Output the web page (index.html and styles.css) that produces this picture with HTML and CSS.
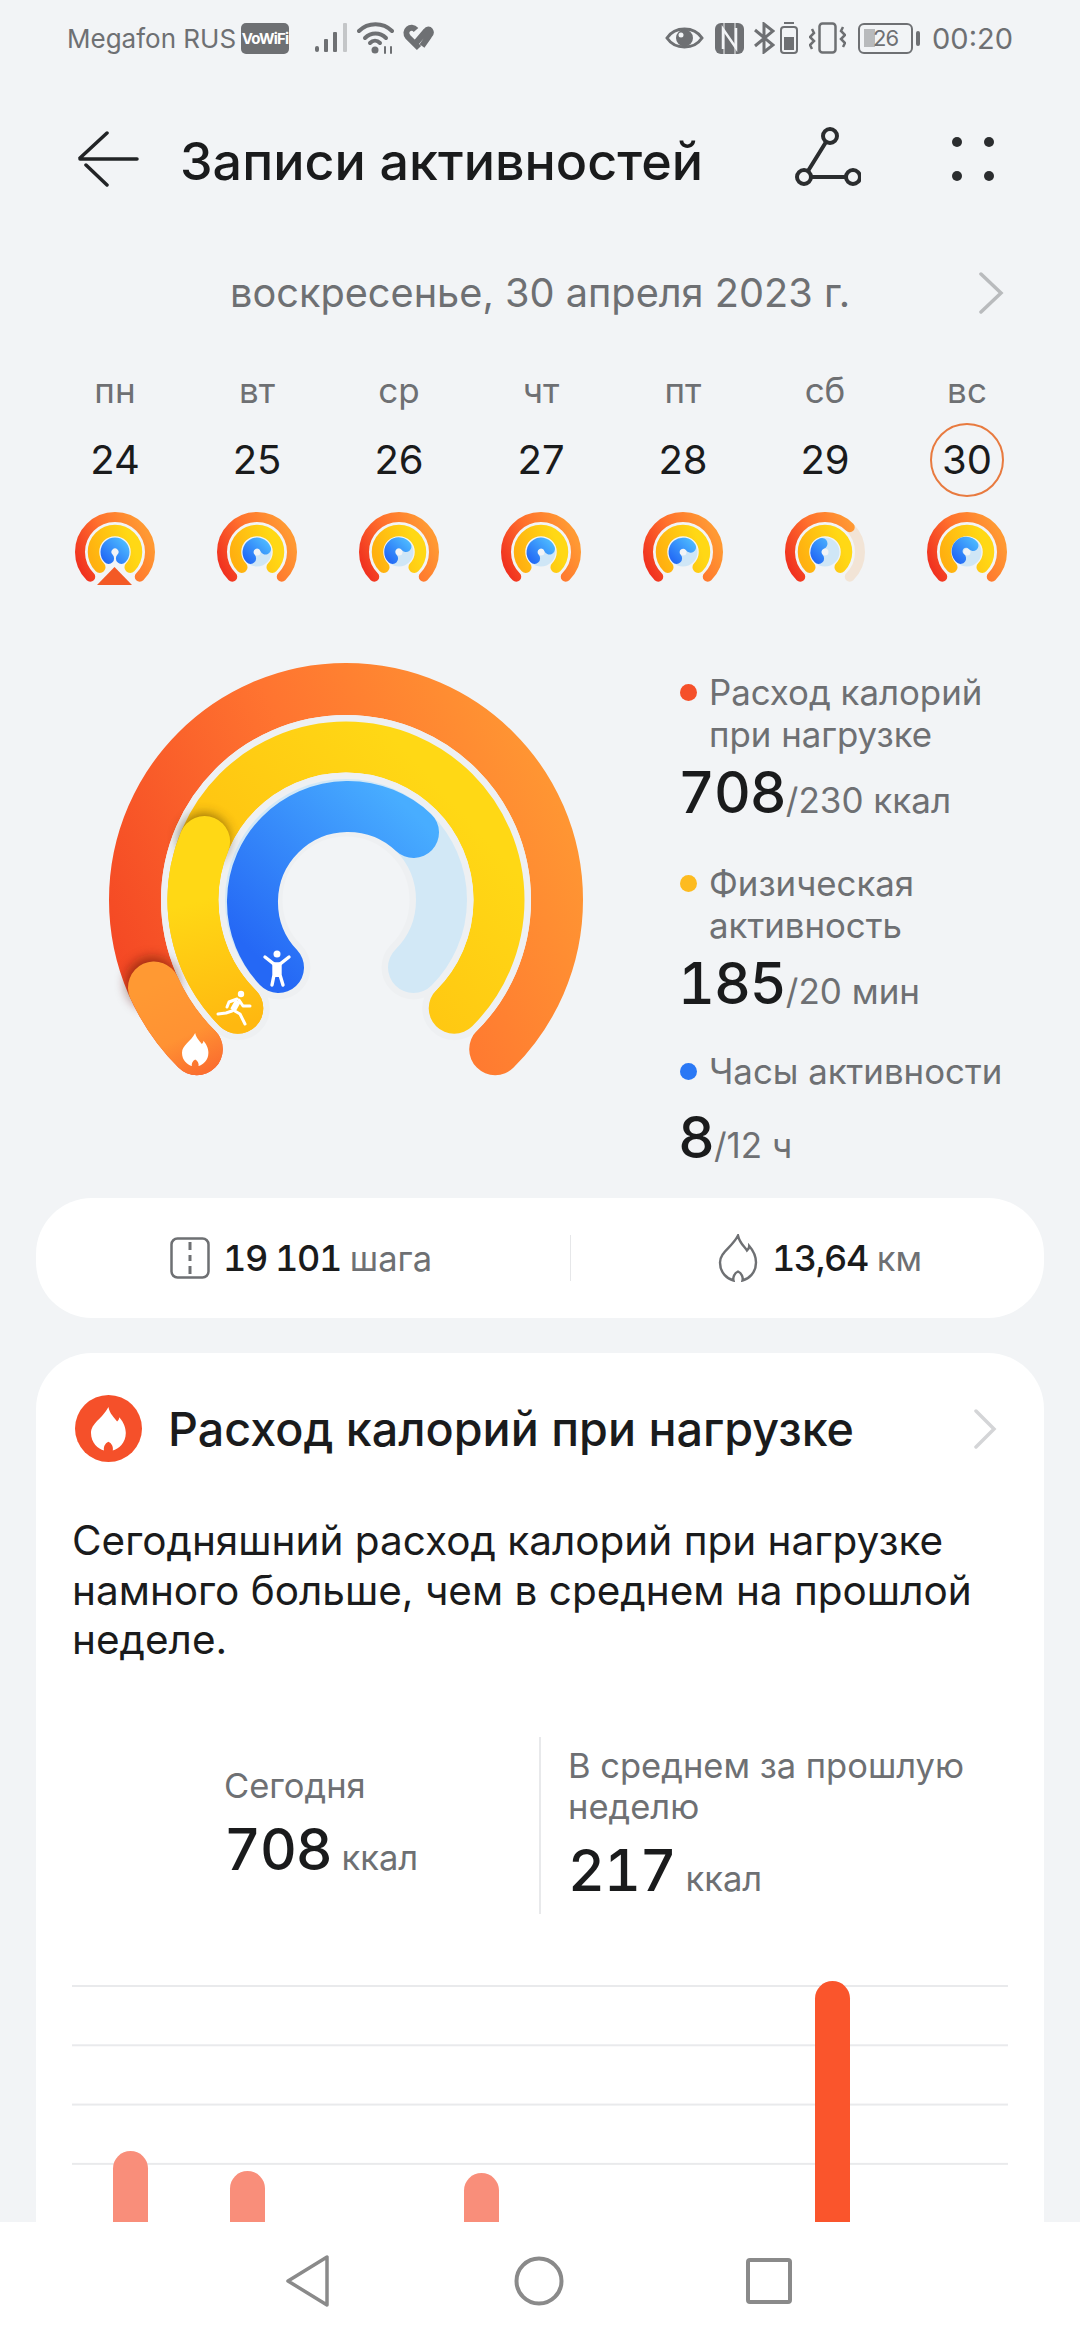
FILE: index.html
```html
<!DOCTYPE html>
<html>
<head>
    <title>Записи активностей</title>
    <meta charset="utf-8">
    <link rel="stylesheet" href="styles.css">
</head>
<body>
    <!-- shared gradients and small ring parts -->
    <svg class="sprite">
        <defs>
            <linearGradient id="bigOuter" gradientUnits="userSpaceOnUse" x1="130" y1="1000" x2="583" y2="800">
                <stop offset="0" stop-color="#f44824"/>
                <stop offset="0.5" stop-color="#ff7430"/>
                <stop offset="1" stop-color="#ff9933"/>
            </linearGradient>
            <linearGradient id="bigOuterCap" gradientUnits="userSpaceOnUse" x1="197" y1="1075" x2="155" y2="985">
                <stop offset="0" stop-color="#fb6f2f"/>
                <stop offset="0.4" stop-color="#ff9233"/>
                <stop offset="1" stop-color="#ff9933"/>
            </linearGradient>
            <linearGradient id="bigYellow" gradientUnits="userSpaceOnUse" x1="230" y1="1000" x2="450" y2="800">
                <stop offset="0" stop-color="#ffbb10"/>
                <stop offset="1" stop-color="#ffd815"/>
            </linearGradient>
            <linearGradient id="bigYellowCap" gradientUnits="userSpaceOnUse" x1="238" y1="1025" x2="205" y2="900">
                <stop offset="0" stop-color="#ffb810"/>
                <stop offset="1" stop-color="#ffd815"/>
            </linearGradient>
            <linearGradient id="bigBlue" gradientUnits="userSpaceOnUse" x1="275" y1="975" x2="420" y2="820">
                <stop offset="0" stop-color="#2568f5"/>
                <stop offset="1" stop-color="#48adff"/>
            </linearGradient>
            <linearGradient id="dayOuter" gradientUnits="userSpaceOnUse" x1="8" y1="65" x2="76" y2="30">
                <stop offset="0" stop-color="#f0301f"/>
                <stop offset="0.5" stop-color="#ff702d"/>
                <stop offset="1" stop-color="#ff9933"/>
            </linearGradient>
            <linearGradient id="dayYellow" gradientUnits="userSpaceOnUse" x1="20" y1="55" x2="60" y2="40">
                <stop offset="0" stop-color="#ffb010"/>
                <stop offset="1" stop-color="#ffd815"/>
            </linearGradient>
            <linearGradient id="dayBlue" gradientUnits="userSpaceOnUse" x1="30" y1="50" x2="50" y2="30">
                <stop offset="0" stop-color="#2268f5"/>
                <stop offset="1" stop-color="#4cb8ff"/>
            </linearGradient>
            <filter id="soft" x="-50%" y="-50%" width="200%" height="200%">
                <feGaussianBlur stdDeviation="6"/>
            </filter>
            <path id="flame" d="M12 0C13 5 16 7 18 10C19 9 19.5 8 19.5 7C23 11 24 15 24 18C24 25 19 29 15 30C15.5 28 14.5 25 12 24C9.5 25 8.5 28 9 30C5 29 0 25 0 18C0 11 8 8 12 0Z"/>
            <path id="dayOuterFull" d="M15.25 64.75A35 35 0 1 1 64.75 64.75" fill="none" stroke="url(#dayOuter)" stroke-width="10" stroke-linecap="round"/>
            <path id="dayYellowFull" d="M24.8 55.2A21.5 21.5 0 1 1 55.2 55.2" fill="none" stroke="url(#dayYellow)" stroke-width="11.5" stroke-linecap="round"/>
            <circle id="dayTrack" cx="40" cy="40" r="9" fill="none" stroke="#cfe6f6" stroke-width="11"/>
        </defs>
    </svg>

    <div class="status">
        <div class="status-group">
            <span class="carrier">Megafon RUS</span>
            <span class="vowifi">VoWiFi</span>
            <svg class="sig" width="32" height="32" viewBox="0 0 32 32">
                <rect x="0" y="24" width="4" height="6" rx="2" fill="#6e7073"/>
                <rect x="9" y="17" width="4" height="13" rx="1" fill="#6e7073"/>
                <rect x="18" y="10" width="4" height="20" rx="1" fill="#6e7073"/>
                <rect x="28" y="1" width="4" height="29" rx="1" fill="#c4c6c8"/>
            </svg>
            <svg class="wifi" width="38" height="32" viewBox="0 0 38 32" fill="none" stroke="#6e7073" stroke-width="4" stroke-linecap="round">
                <path d="M2 9C11 0 26 0 35 9"/>
                <path d="M8 16C14 10 23 10 29 16"/>
                <circle cx="18" cy="28" r="3.5" fill="#6e7073" stroke="none"/>
                <path d="M13 21C16 18 20 18 23 21"/>
                <path d="M28 25V31M34 25V31" stroke-width="2"/>
            </svg>
            <svg class="heart" width="32" height="30" viewBox="0 0 32 30" fill="none" stroke="#6e7073" stroke-width="6">
                <path d="M17 25L6 14C1 8 9 1 14 7"/>
                <path d="M13 21L24 8C27 4 31 9 27 13L20 23"/>
            </svg>
        </div>
        <div class="status-group">
            <svg width="39" height="26" viewBox="0 0 39 26">
                <path d="M2 13C10 1 29 1 37 13C29 25 10 25 2 13Z" fill="none" stroke="#6e7073" stroke-width="3"/>
                <circle cx="19.5" cy="13" r="8.5" fill="#6e7073"/>
                <circle cx="16" cy="10" r="2.5" fill="#f2f4f6"/>
            </svg>
            <svg class="nfc" width="29" height="31" viewBox="0 0 29 31">
                <rect width="29" height="31" rx="6" fill="#6e7073"/>
                <path d="M9 0V31M20 0V31" stroke="#f2f4f6" stroke-width="1"/>
                <path d="M8 26V6L21 25V5" fill="none" stroke="#f2f4f6" stroke-width="2.5"/>
            </svg>
            <svg class="bt" width="21" height="32" viewBox="0 0 21 32" fill="none" stroke="#6e7073" stroke-width="3">
                <path d="M1 8L19 23L10 30V2L19 9L1 24"/>
            </svg>
            <svg class="mini" width="18" height="32" viewBox="0 0 18 32">
                <rect x="4" y="0" width="10" height="2" fill="#6e7073"/>
                <rect x="1" y="5" width="16" height="26" rx="3" fill="none" stroke="#6e7073" stroke-width="2"/>
                <rect x="4" y="15" width="10" height="13" fill="#6e7073"/>
            </svg>
            <svg class="vib" width="37" height="32" viewBox="0 0 37 32" fill="none" stroke="#6e7073" stroke-width="2.5">
                <rect x="10.5" y="1.5" width="16" height="29" rx="3"/>
                <path d="M3 7L5 11L1 15L5 19L1 23L3 27M34 5L32 9L36 13L32 17L36 21L34 25"/>
            </svg>
            <span class="battery"><span class="battery-text">26</span></span>
            <span class="battery-nub"></span>
            <span class="clock">00:20</span>
        </div>
    </div>

    <div class="toolbar">
        <svg class="back" width="62" height="56" viewBox="0 0 62 56" fill="none" stroke="#222426" stroke-width="3.5" stroke-linecap="round">
            <path d="M60 28H3M30 2L3 27M9 34L30 54"/>
        </svg>
        <h1 class="title">Записи активностей</h1>
        <svg class="route" width="66" height="66" viewBox="0 0 66 66" fill="none" stroke="#2b2d2f" stroke-width="4">
            <circle cx="35" cy="10" r="7"/>
            <circle cx="9" cy="51" r="7"/>
            <circle cx="58" cy="51" r="7"/>
            <path d="M31 16L13 45M16 51H51"/>
        </svg>
        <div class="dots"><i></i><i></i><i></i><i></i></div>
    </div>

    <div class="date-row">
        <span class="date">воскресенье, 30 апреля 2023 г.</span>
        <svg class="date-next" width="26" height="42" viewBox="0 0 26 42" fill="none" stroke="#b9bbbd" stroke-width="3.5" stroke-linecap="round">
            <path d="M3 2L23 21L3 40"/>
        </svg>
    </div>

    <div class="week">
        <div class="day">
            <span class="day-name">пн</span>
            <span class="day-num">24</span>
            <svg class="day-ring" width="80" height="80" viewBox="0 0 80 80">
                <use href="#dayOuterFull"/><use href="#dayYellowFull"/>
                <path d="M33.6 46.4A9 9 0 1 1 46.4 46.4" fill="none" stroke="url(#dayBlue)" stroke-width="11" stroke-linecap="round"/>
                <polygon points="39.5,55 22,73 57,73" fill="#f35a26"/>
            </svg>
        </div>
        <div class="day">
            <span class="day-name">вт</span>
            <span class="day-num">25</span>
            <svg class="day-ring" width="80" height="80" viewBox="0 0 80 80">
                <use href="#dayOuterFull"/><use href="#dayYellowFull"/><use href="#dayTrack"/>
                <path d="M33.6 46.4A9 9 0 1 1 48.5 37" fill="none" stroke="url(#dayBlue)" stroke-width="11" stroke-linecap="round"/>
            </svg>
        </div>
        <div class="day">
            <span class="day-name">ср</span>
            <span class="day-num">26</span>
            <svg class="day-ring" width="80" height="80" viewBox="0 0 80 80">
                <use href="#dayOuterFull"/><use href="#dayYellowFull"/><use href="#dayTrack"/>
                <path d="M33.6 46.4A9 9 0 1 1 47 34.5" fill="none" stroke="url(#dayBlue)" stroke-width="11" stroke-linecap="round"/>
            </svg>
        </div>
        <div class="day">
            <span class="day-name">чт</span>
            <span class="day-num">27</span>
            <svg class="day-ring" width="80" height="80" viewBox="0 0 80 80">
                <use href="#dayOuterFull"/><use href="#dayYellowFull"/><use href="#dayTrack"/>
                <path d="M33.6 46.4A9 9 0 1 1 48.5 37" fill="none" stroke="url(#dayBlue)" stroke-width="11" stroke-linecap="round"/>
            </svg>
        </div>
        <div class="day">
            <span class="day-name">пт</span>
            <span class="day-num">28</span>
            <svg class="day-ring" width="80" height="80" viewBox="0 0 80 80">
                <use href="#dayOuterFull"/><use href="#dayYellowFull"/><use href="#dayTrack"/>
                <path d="M33.6 46.4A9 9 0 1 1 47.6 35.2" fill="none" stroke="url(#dayBlue)" stroke-width="11" stroke-linecap="round"/>
            </svg>
        </div>
        <div class="day">
            <span class="day-name">сб</span>
            <span class="day-num">29</span>
            <svg class="day-ring" width="80" height="80" viewBox="0 0 80 80">
                <path d="M15.25 64.75A35 35 0 1 1 64.75 64.75" fill="none" stroke="#f2e4d6" stroke-width="10" stroke-linecap="round"/>
                <path d="M15.25 64.75A35 35 0 0 1 64.75 15.25" fill="none" stroke="url(#dayOuter)" stroke-width="10" stroke-linecap="round"/>
                <use href="#dayYellowFull"/><use href="#dayTrack"/>
                <path d="M33.6 46.4A9 9 0 0 1 37 31.5" fill="none" stroke="url(#dayBlue)" stroke-width="11" stroke-linecap="round"/>
            </svg>
        </div>
        <div class="day">
            <span class="day-name">вс</span>
            <span class="day-num day-num-now">30</span>
            <svg class="day-ring" width="80" height="80" viewBox="0 0 80 80">
                <use href="#dayOuterFull"/><use href="#dayYellowFull"/><use href="#dayTrack"/>
                <path d="M33.6 46.4A9 9 0 1 1 46 33.5" fill="none" stroke="url(#dayBlue)" stroke-width="11" stroke-linecap="round"/>
            </svg>
        </div>
    </div>

    <div class="hero">
        <svg class="gauge" width="520" height="450" viewBox="90 650 520 450" fill="none" stroke-linecap="round">
            <path d="M196.8 1050.2A211 211 0 1 1 495.2 1050.2" stroke="url(#bigOuter)" stroke-width="52"/>
            <path d="M237.8 1009.2A153 153 0 1 1 454.2 1009.2" stroke="#eef0f2" stroke-width="64"/>
            <path d="M237.8 1009.2A153 153 0 1 1 454.2 1009.2" stroke="url(#bigYellow)" stroke-width="51"/>
            <path d="M278.5 968.5A95.5 95.5 0 1 1 413.5 968.5" stroke="#eef0f2" stroke-width="64"/>
            <path d="M278.5 968.5A95.5 95.5 0 1 1 413.5 968.5" stroke="#d2e8f6" stroke-width="51"/>
            <path d="M278.5 968.5A95.5 95.5 0 0 1 413.5 833.5" stroke="url(#bigBlue)" stroke-width="51"/>
            <circle cx="152" cy="984" r="26" fill="#5a1200" stroke="none" opacity="0.55" filter="url(#soft)"/>
            <path d="M196.8 1050.2A211 211 0 0 1 154 988.5" stroke="url(#bigOuterCap)" stroke-width="52"/>
            <circle cx="204" cy="840" r="25" fill="#4a3000" stroke="none" opacity="0.6" filter="url(#soft)"/>
            <path d="M237.8 1009.2A153 153 0 0 1 204.6 842.5" stroke="url(#bigYellowCap)" stroke-width="51"/>
            <use href="#flame" transform="translate(182 1034) scale(1.1)" fill="#fff" stroke="none"/>
            <!-- runner -->
            <g stroke="#fff" stroke-width="3" stroke-linejoin="round">
                <circle cx="241" cy="995" r="3.2" fill="#fff" stroke="none"/>
                <path d="M238 1002L233 1011" stroke-width="6" stroke-linecap="butt"/>
                <path d="M232 1012L226 1014L218 1015"/>
                <path d="M233 1011L240 1015L245 1025"/>
                <path d="M239 1001L243 1007L250 1007"/>
                <path d="M237 1000L229 1003L227 1008"/>
            </g>
            <!-- person -->
            <g stroke="#fff" stroke-width="3.4">
                <circle cx="277" cy="955" r="3.5" fill="#fff" stroke="none"/>
                <path d="M265 958L274 965H280L289 958"/>
                <path d="M274 965V976L272 986M280 965V976L283 986"/>
                <path d="M277 966V978" stroke-width="6" stroke-linecap="butt"/>
            </g>
        </svg>
        <div class="legend">
            <div class="legend-item">
                <div class="legend-label"><i class="dot dot-red"></i><span>Расход калорий<br>при нагрузке</span></div>
                <div class="legend-value"><b>708</b>/230 ккал</div>
            </div>
            <div class="legend-item">
                <div class="legend-label"><i class="dot dot-yellow"></i><span>Физическая<br>активность</span></div>
                <div class="legend-value"><b>185</b>/20 мин</div>
            </div>
            <div class="legend-item legend-item-last">
                <div class="legend-label"><i class="dot dot-blue"></i><span>Часы активности</span></div>
                <div class="legend-value"><b>8</b>/12 ч</div>
            </div>
        </div>
    </div>

    <div class="stats">
        <div class="stat stat-steps">
            <svg width="40" height="42" viewBox="0 0 40 42" fill="none" stroke="#6e7073" stroke-width="2.5">
                <rect x="1.5" y="1.5" width="37" height="39" rx="6"/>
                <path d="M20 5V13M20 18V24M20 29V37" stroke-width="3"/>
            </svg>
            <span class="stat-num">19 101</span> <span class="stat-unit">шага</span>
        </div>
        <div class="stat stat-dist">
            <svg width="42" height="48" viewBox="-1 -1 26 32" fill="none" stroke="#6e7073" stroke-width="1.6">
                <use href="#flame"/>
            </svg>
            <span class="stat-num">13,64</span> <span class="stat-unit">км</span>
        </div>
    </div>

    <div class="card">
        <div class="card-head">
            <svg width="67" height="67" viewBox="0 0 67 67">
                <circle cx="33.5" cy="33.5" r="33.5" fill="#f5502a"/>
                <use href="#flame" transform="translate(16 12) scale(1.45)" fill="#fff"/>
            </svg>
            <h2 class="card-title">Расход калорий при нагрузке</h2>
            <svg class="card-next" width="24" height="40" viewBox="0 0 24 40" fill="none" stroke="#d4d5d7" stroke-width="3.5" stroke-linecap="round">
                <path d="M3 2L21 20L3 38"/>
            </svg>
        </div>
        <p class="summary">Сегодняшний расход калорий при нагрузке намного больше, чем в среднем на прошлой неделе.</p>
        <div class="compare">
            <div class="compare-col compare-today">
                <div class="compare-label">Сегодня</div>
                <div class="compare-value"><b>708</b> ккал</div>
            </div>
            <div class="compare-col compare-avg">
                <div class="compare-label">В среднем за прошлую неделю</div>
                <div class="compare-value"><b>217</b> ккал</div>
            </div>
        </div>
        <div class="chart">
            <div class="slot"><div class="bar" style="height: 71px"></div></div>
            <div class="slot"><div class="bar" style="height: 51px"></div></div>
            <div class="slot"></div>
            <div class="slot"><div class="bar" style="height: 49px"></div></div>
            <div class="slot"></div>
            <div class="slot"></div>
            <div class="slot"><div class="bar bar-now" style="height: 241px"></div></div>
            <div class="slot"></div>
        </div>
    </div>

    <div class="nav">
        <svg width="45" height="52" viewBox="0 0 45 52" fill="none" stroke="#8a8a8a" stroke-width="3.5" stroke-linejoin="round">
            <path d="M42 2V50L3 26Z"/>
        </svg>
        <svg width="50" height="50" viewBox="0 0 50 50" fill="none" stroke="#8a8a8a" stroke-width="4">
            <circle cx="25" cy="25" r="22.5"/>
        </svg>
        <svg width="46" height="46" viewBox="0 0 46 46" fill="none" stroke="#8a8a8a" stroke-width="4">
            <rect x="2" y="2" width="42" height="42" rx="2"/>
        </svg>
    </div>
</body>
</html>
```

FILE: styles.css
```css
* {
    box-sizing: border-box;
}
body {
    margin: 0;
    width: 1080px;
    height: 2340px;
    overflow: hidden;
    display: flex;
    flex-direction: column;
    background: #f2f4f6;
    font-family: Inter, "Noto Sans", sans-serif;
    color: #1a1b1c;
}
.sprite {
    display: block;
    flex: none;
    width: 0;
    height: 0;
}

/* status bar */
.status {
    height: 76px;
    flex: none;
    padding: 0 67px;
    display: flex;
    justify-content: space-between;
    align-items: center;
    color: #6e7073;
}
.status-group {
    display: flex;
    align-items: center;
}
.carrier {
    font-size: 26px;
}
.vowifi {
    margin-left: 5px;
    width: 48px;
    height: 31px;
    border-radius: 5px;
    background: #6e7073;
    color: #fff;
    font-size: 15px;
    font-weight: 700;
    line-height: 31px;
    text-align: center;
    letter-spacing: -0.8px;
}
.sig {
    margin-left: 26px;
}
.wifi {
    margin-left: 10px;
}
.heart {
    margin-left: 7px;
}
.nfc {
    margin-left: 11px;
}
.bt {
    margin-left: 10px;
}
.mini {
    margin-left: 5px;
}
.vib {
    margin-left: 11px;
}
.battery {
    margin-left: 12px;
    width: 55px;
    height: 31px;
    border: 2.5px solid #6e7073;
    border-radius: 6px;
    display: flex;
    align-items: center;
    justify-content: center;
    background: linear-gradient(#b8babc, #b8babc) 4px 4px / 11px 18px no-repeat;
}
.battery-text {
    font-size: 22px;
    letter-spacing: -1px;
}
.battery-nub {
    margin-left: 3px;
    width: 4px;
    height: 15px;
    border-radius: 2px;
    background: #6e7073;
}
.clock {
    margin-left: 12px;
    font-size: 29px;
}

/* toolbar */
.toolbar {
    height: 100px;
    margin-top: 33px;
    flex: none;
    padding: 0 0 0 77px;
    display: flex;
    align-items: center;
}
.title {
    margin: 5px 0 0 41px;
    width: 613px;
    font-size: 52px;
    font-weight: 500;
    white-space: nowrap;
}
.route {
    margin-left: 2px;
}
.dots {
    margin-left: 91px;
    width: 42px;
    display: grid;
    grid-template-columns: 10px 10px;
    justify-content: space-between;
    row-gap: 24px;
}
.dots i {
    width: 10px;
    height: 10px;
    border-radius: 50%;
    background: #2b2d2f;
}

/* date row and week */
.date-row {
    height: 68px;
    margin-top: 50px;
    flex: none;
    padding: 0 76px 0 230px;
    display: flex;
    justify-content: space-between;
    align-items: center;
}
.date {
    font-size: 39.7px;
    color: #6e7073;
}
.week {
    flex: none;
    margin-top: 38px;
    padding: 0 44px;
    display: grid;
    grid-template-columns: repeat(7, 142px);
}
.day {
    display: flex;
    flex-direction: column;
    align-items: center;
}
.day-name {
    height: 50px;
    line-height: 50px;
    font-size: 35px;
    color: #6e7073;
}
.day-num {
    width: 74px;
    height: 74px;
    margin-top: 8px;
    line-height: 74px;
    text-align: center;
    font-size: 40px;
    border-radius: 50%;
}
.day-num-now {
    line-height: 70px;
    border: 2.5px solid #e87a3f;
}
.day-ring {
    margin-top: 15px;
}

/* big gauge and legend */
.hero {
    flex: none;
    height: 549px;
    margin-top: 57px;
    padding-left: 90px;
    display: flex;
}
.gauge {
    flex: none;
}
.legend {
    margin: 22px 0 0 71px;
    display: flex;
    flex-direction: column;
    gap: 24px;
}
.legend-item-last .legend-label {
    margin-top: -3px;
}
.legend-item-last .legend-value {
    margin-top: 8px;
}
.legend-label {
    display: flex;
    align-items: flex-start;
    gap: 12px;
    font-size: 34.8px;
    line-height: 42px;
    color: #6e7073;
    white-space: nowrap;
}
.dot {
    flex: none;
    width: 17px;
    height: 17px;
    margin-top: 13px;
    margin-left: -1px;
    border-radius: 50%;
}
.dot-red {
    background: #f5502a;
}
.dot-yellow {
    background: #fdbb20;
}
.dot-blue {
    background: #2a78f5;
}
.legend-value {
    margin-left: -3px;
    font-size: 35px;
    line-height: 76px;
    color: #6e7073;
}
.legend-value b,
.compare-value b {
    font-size: 57px;
    font-weight: 500;
    font-variant-numeric: tabular-nums;
    letter-spacing: -1px;
    color: #1a1b1c;
}

/* steps and distance */
.stats {
    flex: none;
    height: 120px;
    margin: 0 36px;
    border-radius: 56px;
    background: #fff;
    display: grid;
    grid-template-columns: 534px 474px;
    align-items: center;
}
.stat {
    height: 46px;
    display: flex;
    align-items: center;
    justify-content: center;
    gap: 9px;
}
.stat-steps {
    padding-right: 4px;
}
.stat-dist {
    padding-left: 24px;
    border-left: 1px solid #e6e7e9;
}
.stat-num {
    margin-left: 4px;
    font-size: 36px;
    font-weight: 500;
    font-variant-numeric: tabular-nums;
    letter-spacing: -1.4px;
}
.stat-unit {
    font-size: 34.5px;
    color: #6e7073;
}

/* calories card */
.card {
    flex: 1;
    min-height: 0;
    margin: 35px 36px 0;
    padding: 42px 36px 0;
    border-radius: 56px 56px 0 0;
    background: #fff;
    overflow: hidden;
}
.card-head {
    padding-left: 3px;
    display: flex;
    align-items: center;
}
.card-title {
    flex: 1;
    margin: 0 0 0 26px;
    font-size: 46.7px;
    font-weight: 500;
    white-space: nowrap;
}
.card-next {
    margin-right: 11px;
}
.summary {
    margin: 54px 0 0;
    font-size: 40.5px;
    line-height: 49.5px;
}
.compare {
    margin-top: 72px;
    height: 165px;
    display: grid;
    grid-template-columns: 467px 1fr;
}
.compare-col {
    font-size: 34.5px;
    color: #6e7073;
}
.compare-today {
    padding: 28px 0 0 152px;
}
.compare-avg {
    padding: 8px 0 0 27px;
    border-left: 2px solid #e8e9eb;
}
.compare-label {
    line-height: 41px;
}
.compare-value {
    margin-top: 9px;
    line-height: 70px;
}
.chart {
    margin-top: 79px;
    height: 241px;
    display: grid;
    grid-template-columns: repeat(8, 1fr);
    align-items: end;
    background: linear-gradient(#e9eaec 2px, transparent 2px) 0 4px / 100% 59.3px;
}
.slot {
    height: 100%;
    display: flex;
    align-items: flex-end;
    justify-content: center;
}
.bar {
    width: 35px;
    border-radius: 18px 18px 0 0;
    background: #f98e7a;
}
.bar-now {
    background: #fa552c;
}

/* navigation bar */
.nav {
    flex: none;
    height: 118px;
    padding-left: 191px;
    background: #fff;
    display: grid;
    grid-template-columns: 232px 232px 228px;
    justify-items: center;
    align-items: center;
}
```
